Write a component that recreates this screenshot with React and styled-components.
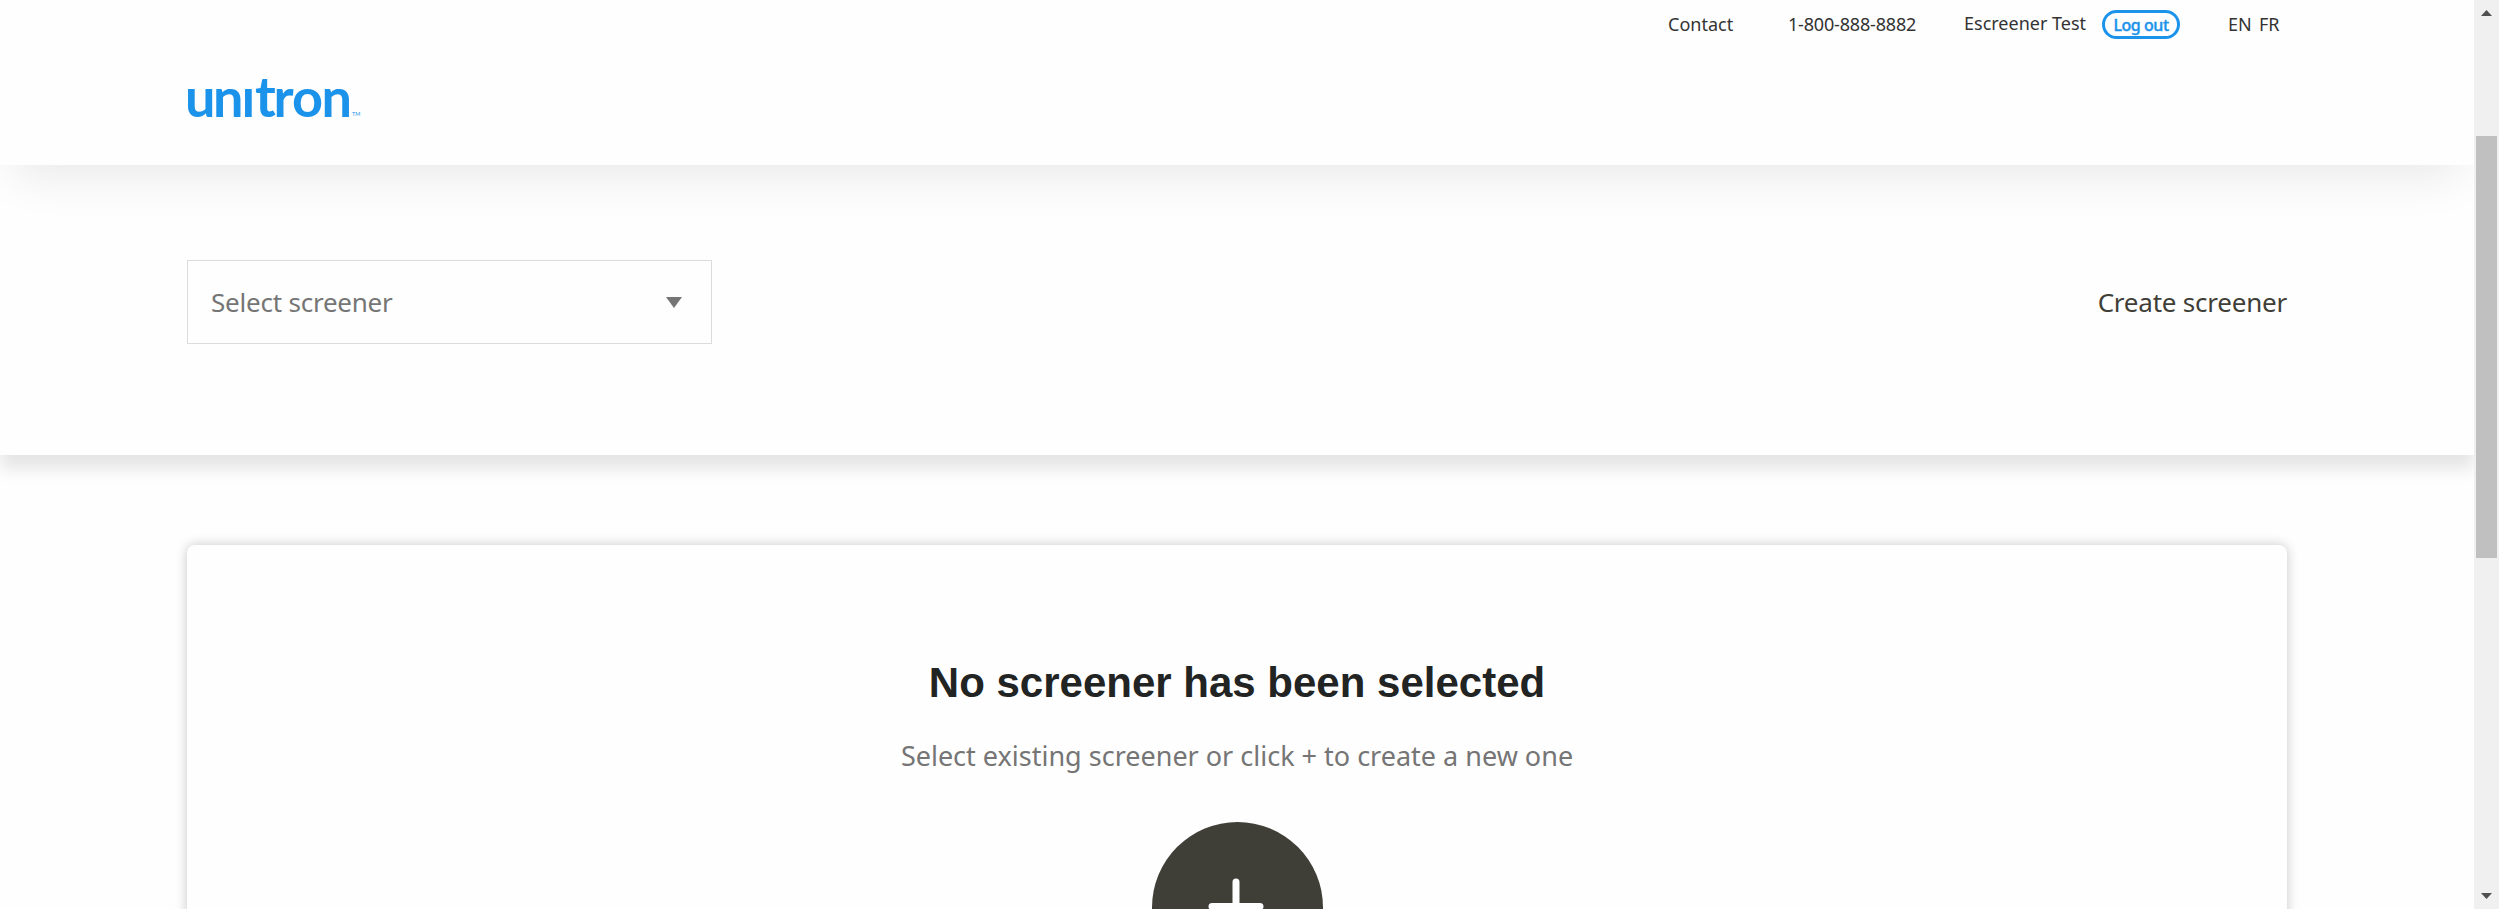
import React from "react";
import styled, { createGlobalStyle } from "styled-components";

const GlobalStyle = createGlobalStyle`
  * { box-sizing: border-box; }
  body {
    margin: 0;
    background: #fefefe;
    font-family: "Noto Sans", "Liberation Sans", sans-serif;
    color: #333;
    overflow: hidden;
  }
`;

const Window = styled.div`
  display: flex;
  height: 909px;
  overflow: hidden;
`;

const Page = styled.div`
  flex: 1;
  display: flex;
  flex-direction: column;
  overflow: hidden;
`;

const Container = styled.div`
  width: 2100px;
  margin: 0 auto;
`;

const Header = styled.header`
  position: relative;
  z-index: 2;
  flex: none;
  height: 165px;
  background: #fefefe;
  box-shadow: 0 24px 45px -14px rgba(0, 0, 0, 0.09);
`;

const TopBar = styled.nav`
  display: flex;
  justify-content: flex-end;
  height: 50px;
  padding-right: 7px;
  font-size: 18px;
  line-height: 25px;
  white-space: nowrap;
`;

const TopItem = styled.span`
  width: ${(p) => p.$width}px;
  margin-left: ${(p) => p.$gap || 0}px;
  padding-top: ${(p) => p.$top}px;
  letter-spacing: ${(p) => p.$tracking || 0}px;
`;

const LogoutButton = styled.button`
  display: flex;
  align-items: center;
  justify-content: center;
  width: 78px;
  height: 29px;
  margin: 10px 0 0 15px;
  padding: 1px 0 0;
  border: 3px solid #1c93ea;
  border-radius: 15px;
  background: #fefefe;
  color: #1c93ea;
  font: 500 16px/20px "Noto Sans", sans-serif;
  letter-spacing: -0.45px;
  -webkit-text-stroke: 0.4px #1c93ea;
  white-space: nowrap;
`;

const Logo = styled.svg`
  display: block;
  margin-top: 20px;
  width: 190px;
  height: 56px;
  overflow: visible;
  fill: #1c93ea;
  font-family: Lato, sans-serif;
`;

const Toolbar = styled.section`
  position: relative;
  z-index: 1;
  flex: none;
  height: 290px;
  padding-top: 95px;
  background: #fefefe;
  box-shadow: 0 14px 16px rgba(0, 0, 0, 0.1);
`;

const ToolbarRow = styled(Container)`
  display: flex;
  align-items: center;
  justify-content: space-between;
`;

const Select = styled.div`
  display: flex;
  align-items: center;
  justify-content: space-between;
  width: 525px;
  height: 84px;
  padding: 0 29px 0 23px;
  border: 1px solid #dcdcdc;
  color: #757575;
  font-size: 26px;
  letter-spacing: -0.22px;
`;

const Arrow = styled.svg`
  display: block;
  fill: #757575;
`;

const CreateLink = styled.a`
  color: #403f37;
  font-size: 26px;
  letter-spacing: -0.22px;
  white-space: nowrap;
`;

const Card = styled(Container)`
  display: flex;
  flex-direction: column;
  align-items: center;
  flex: none;
  height: 520px;
  margin-top: 90px;
  padding-top: 113px;
  border-radius: 8px;
  background: #fefefe;
  box-shadow: 0 0 12px rgba(0, 0, 0, 0.22);
`;

const Title = styled.h2`
  margin: 0;
  color: #222423;
  font: bold 42px/50px "Liberation Sans", Arial, sans-serif;
  white-space: nowrap;
`;

const Hint = styled.p`
  margin: 30px 0 0;
  color: #757575;
  font-size: 27px;
  line-height: 36px;
  white-space: nowrap;
`;

const AddButton = styled.button`
  display: block;
  width: 171px;
  height: 171px;
  margin: 48px 0 0;
  padding: 0;
  border: 0;
  border-radius: 50%;
  background: #403f37;
`;

const Scrollbar = styled.div`
  display: flex;
  flex-direction: column;
  align-items: center;
  width: 25px;
  padding-top: 10px;
  background: #f0f0f0;
`;

const Thumb = styled.div`
  flex: none;
  width: 21px;
  height: 422px;
  margin: 120px 0 335px;
  background: #c0c0c0;
`;

const Step = styled.svg`
  display: block;
  flex: none;
  fill: #505050;
`;

export default function App() {
  return (
    <Window>
      <GlobalStyle />
      <Page>
        <Header>
          <Container>
            <TopBar>
              <TopItem $width={65} $top={12}>Contact</TopItem>
              <TopItem $width={127} $gap={55} $top={12} $tracking={-0.18}>1-800-888-8882</TopItem>
              <TopItem $width={123} $gap={49} $top={11}>Escreener Test</TopItem>
              <LogoutButton>Log out</LogoutButton>
              <TopItem $width={23} $gap={48} $top={12}>EN</TopItem>
              <TopItem $width={21} $gap={8} $top={12}>FR</TopItem>
            </TopBar>
            <Logo viewBox="0 0 190 56" role="img" aria-label="unitron">
              <text y="46.500" fontSize="54" fontWeight="700">
                <tspan x="-2 26 54.500">unı</tspan>
                <tspan x="68" fontSize="56">t</tspan>
                <tspan x="86.500 105 134.500">ron</tspan>
              </text>
              <text x="165" y="45.500" fontSize="5.500">TM</text>
            </Logo>
          </Container>
        </Header>
        <Toolbar>
          <ToolbarRow>
            <Select>
              <span>Select screener</span>
              <Arrow width="16" height="11" viewBox="0 0 16 11"><path d="M0 0H16L8 11Z" /></Arrow>
            </Select>
            <CreateLink>Create screener</CreateLink>
          </ToolbarRow>
        </Toolbar>
        <Card>
          <Title>No screener has been selected</Title>
          <Hint>Select existing screener or click + to create a new one</Hint>
          <AddButton aria-label="Create screener">
            <svg width="171" height="171" viewBox="0 0 171 171" fill="none" stroke="#fefefe" strokeWidth="7" strokeLinecap="round">
              <path d="M84 60V109M60 84.500H108" />
            </svg>
          </AddButton>
        </Card>
      </Page>
      <Scrollbar>
        <Step width="11" height="6" viewBox="0 0 11 6"><path d="M0 6L5.500 0L11 6Z" /></Step>
        <Thumb />
        <Step width="11" height="6" viewBox="0 0 11 6"><path d="M0 0L5.500 6L11 0Z" /></Step>
      </Scrollbar>
    </Window>
  );
}
